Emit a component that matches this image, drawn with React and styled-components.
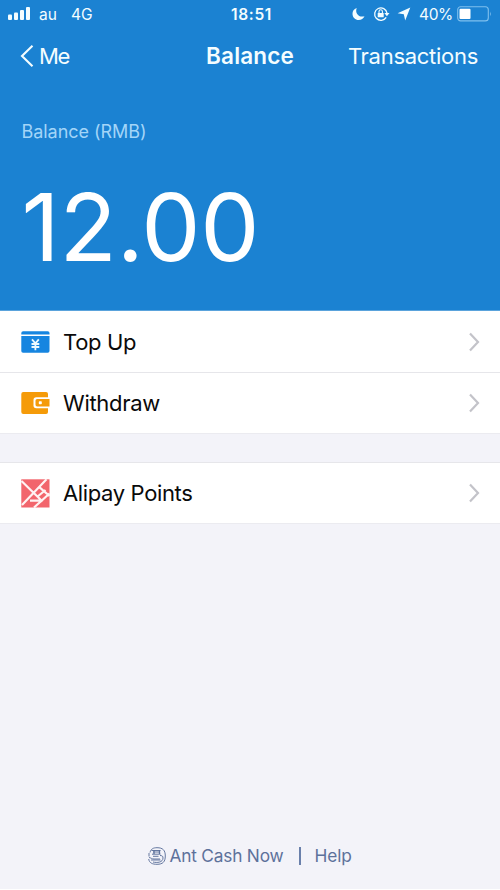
import React from "react";
import styled, { createGlobalStyle } from "styled-components";

const GlobalStyle = createGlobalStyle`
  * { box-sizing: border-box; }
  body { margin: 0; background: #fff; }
`;

const Screen = styled.div`
  width: 500px;
  height: 889px;
  display: flex;
  flex-direction: column;
  background: #f3f3f9;
  font-family: Inter, "Noto Sans", sans-serif;
  color: #0a0a0a;
  overflow: hidden;
`;

const Hero = styled.header`
  height: 311px;
  flex: none;
  background: #1b82d2;
  border-bottom: 1px solid #5aa3dc;
  color: #f4fdff;
`;

const Bar = styled.div`
  display: grid;
  grid-template-columns: 1fr auto 1fr;
  align-items: center;
  white-space: nowrap;
`;

const StatusBar = styled(Bar)`
  height: 28px;
  padding: 0 8px;
  font-size: 15.5px;
`;

const StatusGroup = styled.div`
  display: flex;
  align-items: center;
  justify-content: ${(p) => (p.$end ? "flex-end" : "flex-start")};
`;

const Label = styled.span`
  margin-left: ${(p) => p.$gap || 0}px;
  letter-spacing: ${(p) => p.$track || 0}px;
`;

const Clock = styled.span`
  font-weight: 600;
  font-size: 15.5px;
  letter-spacing: 0.7px;
  margin-left: 3px;
`;

const NavBar = styled(Bar)`
  height: 56px;
  padding: 0 22px 0 20px;
  font-size: 22px;
`;

const BackLink = styled.div`
  display: flex;
  align-items: center;
  gap: 5px;
  letter-spacing: -1.4px;
`;

const Title = styled.h1`
  margin: 0 0 1px 2px;
  font-size: 22.5px;
  font-weight: 600;
  letter-spacing: 0.15px;
`;

const NavAction = styled.div`
  text-align: right;
  letter-spacing: -0.28px;
`;

const BalanceLabel = styled.div`
  height: 24px;
  line-height: 24px;
  margin: 36px 0 0 21.5px;
  font-size: 18px;
  letter-spacing: -0.05px;
  color: #a3d5f8;
`;

const Amount = styled.div`
  height: 100px;
  line-height: 100px;
  margin: 33px 0 0 21.5px;
  font-size: 94px;
  letter-spacing: -0.2px;
  color: #fff;
`;

const List = styled.section`
  flex: none;
  background: #fff;
  margin-bottom: 28px;
  border-bottom: 1px solid #ebebf0;
`;

const Row = styled.div`
  height: ${(p) => p.$height}px;
  display: flex;
  align-items: center;
  padding: 0 20px 0 21px;
  border-top: ${(p) => (p.$divided ? "1px solid #e6e6ea" : "0")};
  font-size: 22px;
`;

const RowLabel = styled.span`
  flex: 1;
  margin-left: 13px;
  letter-spacing: ${(p) => p.$track}px;
`;

const Footer = styled.footer`
  margin-top: auto;
  height: 67px;
  display: flex;
  align-items: center;
  padding-left: 148px;
  font-size: 17.3px;
  color: #5d719b;
  white-space: nowrap;
`;

const Separator = styled.i`
  width: 2px;
  height: 18px;
  margin: 0 14px 0 15px;
  background: #6a80ab;
`;

const Glyph = styled.svg`
  display: block;
  flex: none;
  margin-left: ${(p) => p.$gap || 0}px;
`;

const SignalIcon = () => (
  <Glyph width="23" height="14" viewBox="0 0 23 14" fill="#f4fdff">
    <rect x="0" y="7.5" width="4" height="5.5" rx="1" />
    <rect x="6" y="5.5" width="4" height="7.5" rx="1" />
    <rect x="12" y="3" width="4" height="10" rx="1" />
    <rect x="18" y="0" width="4" height="13" rx="1" />
  </Glyph>
);

const MoonIcon = () => (
  <Glyph width="13" height="14" viewBox="0 0 13 14" fill="#f4fdff">
    <path d="M4.7 1C1.9 2 .4 4.3.5 7c.2 3.500 2.800 6 6.200 6 2.600 0 4.800-1.400 5.800-3.800C7.200 11 2.600 6.500 4.700 1Z" />
  </Glyph>
);

const RotationLockIcon = () => (
  <Glyph $gap={8} width="17" height="16" viewBox="0 0 17 16" fill="none" stroke="#f4fdff">
    <path d="M13.200 11.300A6.200 6.200 0 1 1 14 7.200" strokeWidth="1.300" />
    <path d="M11.300 7h5.200l-2.600 3.200Z" fill="#f4fdff" stroke="none" />
    <rect x="4.700" y="7" width="6" height="4.300" rx=".4" fill="#f4fdff" stroke="none" />
    <path d="M6 7V5.500a1.700 1.700 0 0 1 3.400 0V7" strokeWidth="1.100" />
  </Glyph>
);

const LocationIcon = () => (
  <Glyph $gap={7} width="14" height="14" viewBox="0 0 14 14" fill="#f4fdff">
    <path d="M13.300.500 8.200 13.500 6.800 7.300.6 6.200Z" />
  </Glyph>
);

const BatteryIcon = () => (
  <Glyph $gap={4} width="35" height="16" viewBox="0 0 35 16" fill="none">
    <rect x=".7" y=".7" width="30.600" height="14.200" rx="3" stroke="#7fc0ee" strokeWidth="1.100" />
    <rect x="2.500" y="2.700" width="11" height="10.200" rx="1" fill="#fff" />
    <path d="M33 5.500q1.700 2.400 0 4.800Z" fill="#7fc0ee" />
  </Glyph>
);

const BackIcon = () => (
  <Glyph width="14" height="24" viewBox="0 0 14 24" fill="none" stroke="#f4fdff" strokeWidth="2.100">
    <path d="M12.500 1.800 2 12l10.500 10.200" />
  </Glyph>
);

const ChevronIcon = () => (
  <Glyph width="12" height="20" viewBox="0 0 12 20" fill="none" stroke="#c3c3c9" strokeWidth="2.200">
    <path d="m2 1.400 8 8.600-8 8.600" />
  </Glyph>
);

const TopUpIcon = () => (
  <Glyph width="29" height="30" viewBox="0 0 29 30">
    <path d="M.3 7.500V6q0-1.800 1.800-1.800h24.600q1.800 0 1.800 1.800v1.500Z" fill="#1685e0" />
    <path d="M.3 9h28.200v15q0 1.800-1.800 1.800H2.100Q.3 25.800.3 24Z" fill="#1685e0" />
    <path d="m11 12.300 3.400 4 3.400-4M10.500 17h7.800M10.500 20h7.800M14.400 16.300v6.900" fill="none" stroke="#eefaff" strokeWidth="1.800" />
  </Glyph>
);

const WithdrawIcon = () => (
  <Glyph width="29" height="30" viewBox="0 0 29 30">
    <rect x=".3" y="4" width="26.700" height="22" rx="2" fill="#f59b09" />
    <path d="M29 9.200H15.300q-2.800 0-2.800 2.800v5.500q0 2.800 2.800 2.800H29" fill="#fff" />
    <path d="M28.500 11H16.200q-1.700 0-1.700 1.700v4.100q0 1.700 1.700 1.700h12.300Z" fill="#f59b09" />
    <rect x="17.800" y="13.300" width="3" height="3" rx=".7" fill="#fff" />
  </Glyph>
);

const PointsIcon = () => (
  <Glyph width="29" height="29" viewBox="0 0 29 29">
    <path d="M.3.300h28.200v28.200H.3Z" fill="#f2656c" />
    <path d="M.5 2 21.500 22.500M25.500.3 1 26M18 7.800l10.500 9.200M28.500 14.500 13 28.500M24.500 11 16 18M9 21.700h11.500" fill="none" stroke="#fff2f2" strokeWidth="2.200" />
  </Glyph>
);

const AntCashIcon = () => (
  <Glyph width="18" height="18" viewBox="0 0 18 18" fill="none" stroke="#5d719b" strokeWidth="0.95">
    <path d="M2 5.500C3 1.700 5.500.7 9 .7c5.800 0 8.300 2.500 8.300 8.300S14.800 17.300 9 17.300c-4.700 0-7.700-1.300-8.300-5.300" />
    <path d="M3.500 3.500h9M5 5h7M4 7.200h8.500M5 9.300h5.500M1 10.500c2 .2 2.500 1.500 5 1.500h6M3 13h9.500M5 15c4 1 10 .5 10-4 0-2-1-2.500-3-2.500M1 9.500V6" />
    <path d="M6 3v4M11.500 3v4" strokeWidth="1.300" />
  </Glyph>
);

export default function App() {
  return (
    <>
      <GlobalStyle />
      <Screen>
        <Hero>
          <StatusBar>
            <StatusGroup>
              <SignalIcon />
              <Label $gap={8}>au</Label>
              <Label $gap={14}>4G</Label>
            </StatusGroup>
            <Clock>18:51</Clock>
            <StatusGroup $end>
              <MoonIcon />
              <RotationLockIcon />
              <LocationIcon />
              <Label $gap={8} $track={-0.35}>40%</Label>
              <BatteryIcon />
            </StatusGroup>
          </StatusBar>
          <NavBar>
            <BackLink>
              <BackIcon />
              Me
            </BackLink>
            <Title>Balance</Title>
            <NavAction>Transactions</NavAction>
          </NavBar>
          <BalanceLabel>Balance (RMB)</BalanceLabel>
          <Amount>12.00</Amount>
        </Hero>
        <List>
          <Row $height={61}>
            <TopUpIcon />
            <RowLabel $track={-0.35}>Top Up</RowLabel>
            <ChevronIcon />
          </Row>
          <Row $height={61} $divided>
            <WithdrawIcon />
            <RowLabel $track={-0.3}>Withdraw</RowLabel>
            <ChevronIcon />
          </Row>
        </List>
        <List>
          <Row $height={61} $divided>
            <PointsIcon />
            <RowLabel $track={-0.36}>Alipay Points</RowLabel>
            <ChevronIcon />
          </Row>
        </List>
        <Footer>
          <AntCashIcon />
          <Label $gap={3.5} $track={-0.2}>Ant Cash Now</Label>
          <Separator />
          <Label $track={-0.1}>Help</Label>
        </Footer>
      </Screen>
    </>
  );
}
